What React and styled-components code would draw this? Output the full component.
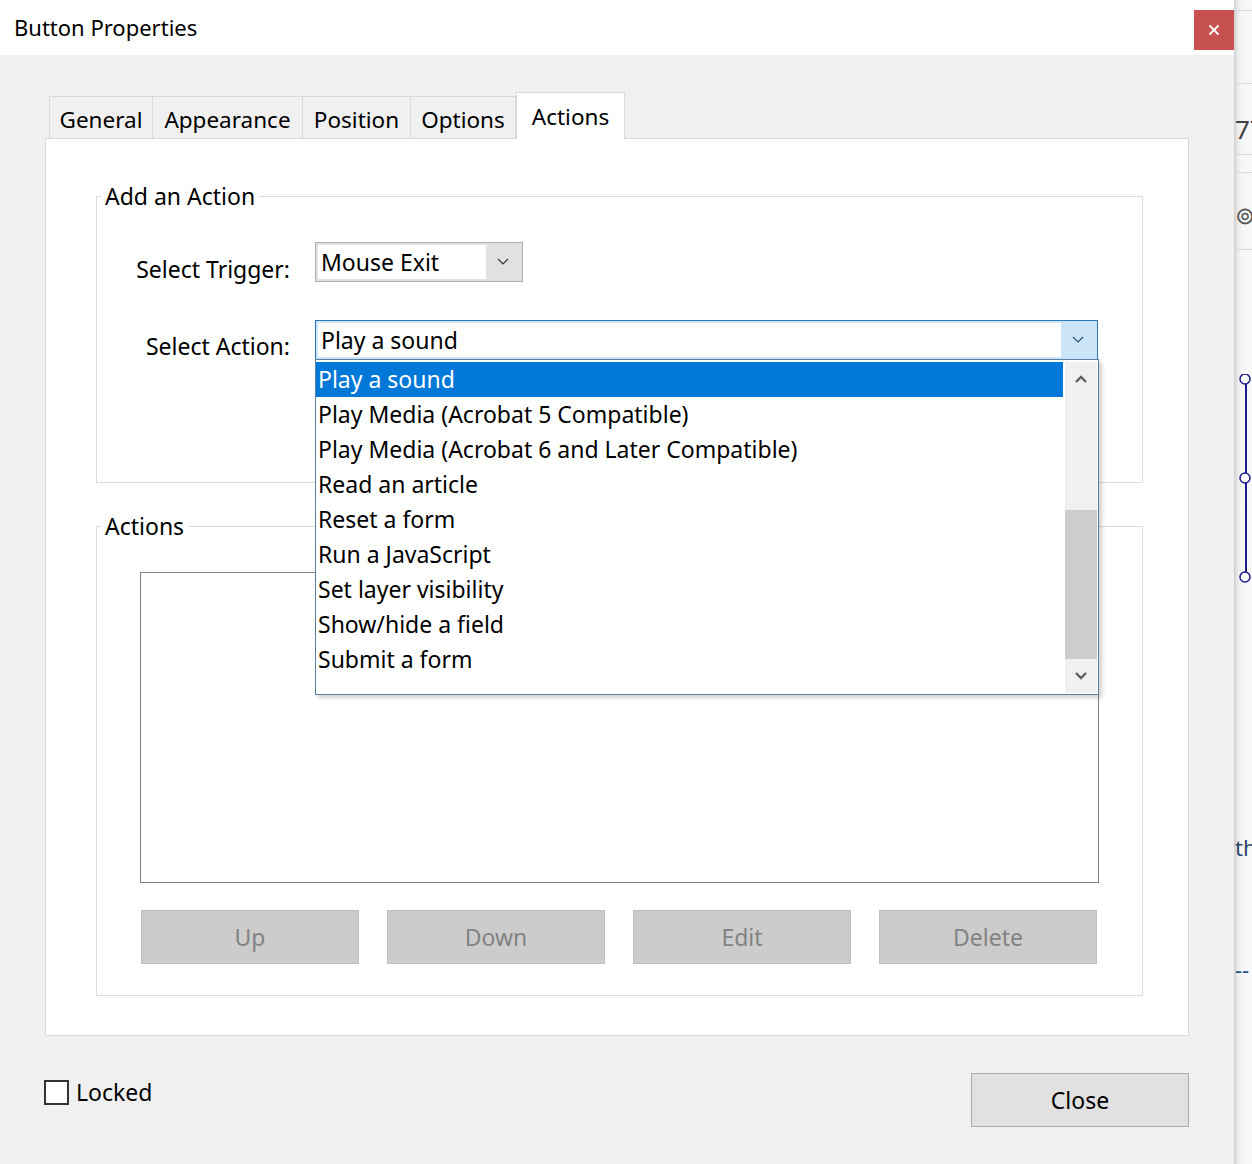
import React from 'react'
import styled, { createGlobalStyle } from 'styled-components'

const GlobalStyle = createGlobalStyle`
  html, body { margin: 0; padding: 0; }
  body {
    width: 1252px;
    height: 1164px;
    overflow: hidden;
    font-family: "Noto Sans", "Open Sans", sans-serif;
    color: #000;
    background: #f7f7f7;
  }
`

const Page = styled.div`
  display: flex;
  width: 1252px;
  height: 1164px;
`

const Dialog = styled.div`
  width: 1234px;
  display: flex;
  flex-direction: column;
  background: #f0f0f0;
`

const TitleBar = styled.div`
  height: 55px;
  background: #fff;
  display: flex;
  justify-content: space-between;
  align-items: flex-start;
`

const Title = styled.div`
  font-size: 22px;
  line-height: 26px;
  margin: 14px 0 0 14px;
`

const CloseX = styled.div`
  width: 40px;
  height: 40px;
  margin-top: 10px;
  background: #c75050;
  display: flex;
  align-items: center;
  justify-content: center;
`

const Body = styled.div`
  flex: 1;
  padding: 37px 45px 0 45px;
  display: flex;
  flex-direction: column;
`

const Tabs = styled.div`
  display: flex;
  align-items: flex-end;
  margin-left: 4px;
  position: relative;
  z-index: 1;
`

const Tab = styled.div`
  width: ${p => p.w}px;
  height: ${p => (p.active ? 47 : 42)}px;
  margin-bottom: ${p => (p.active ? -1 : 0)}px;
  box-sizing: border-box;
  border: 1px solid #d9d9d9;
  border-bottom: none;
  border-left: ${p => (p.first || p.active ? '1px solid #d9d9d9' : 'none')};
  background: ${p => (p.active ? '#fff' : '#f0f0f0')};
  font-size: 22.5px;
  display: flex;
  align-items: center;
  justify-content: center;
  padding-top: ${p => (p.active ? 0 : 4)}px;
`

const Panel = styled.div`
  height: 898px;
  box-sizing: border-box;
  background: #fff;
  border: 1px solid #d9d9d9;
  padding: 45px 45px 40px 50px;
  display: flex;
  flex-direction: column;
  gap: 31px;
`

const Group = styled.fieldset`
  margin: 0;
  min-width: 0;
  border: 1px solid #dcdcdc;
  padding: 34px 0 ${p => p.pb}px 0;
  position: relative;
`

const Legend = styled.legend`
  font-size: 23px;
  line-height: 24px;
  padding: 0 4px;
  margin-left: 4px;
`

const FormGrid = styled.div`
  display: grid;
  grid-template-columns: 193px auto;
  column-gap: 25px;
  row-gap: 37px;
  align-items: start;
`

const Label = styled.div`
  font-size: 23px;
  line-height: 28px;
  text-align: right;
  padding-top: ${p => p.pt}px;
`

const Combo = styled.div`
  position: relative;
  width: ${p => p.w}px;
  height: 40px;
  box-sizing: border-box;
  border: 1px solid ${p => (p.focused ? '#2b78b8' : '#adadad')};
  background: ${p => (p.focused ? '#cce4f7' : '#e1e1e1')};
  display: flex;
  padding: 2px;
`

const ComboText = styled.div`
  flex: 1;
  background: #fff;
  font-size: 23px;
  line-height: 34px;
  padding-left: 3px;
  white-space: nowrap;
`

const ComboArrow = styled.div`
  width: 34px;
  display: flex;
  align-items: center;
  justify-content: center;
`

const DropList = styled.div`
  position: absolute;
  top: 38px;
  left: -1px;
  width: 784px;
  height: 336px;
  box-sizing: border-box;
  border: 1px solid #5b7ea3;
  background: #fff;
  box-shadow: 3px 3px 4px rgba(0, 0, 0, 0.18);
  display: flex;
  padding: 2px 0 1px 0;
  z-index: 5;
`

const Items = styled.div`
  width: 747px;
  display: flex;
  flex-direction: column;
`

const Item = styled.div`
  height: 35px;
  box-sizing: border-box;
  padding-left: 2px;
  font-size: 23px;
  line-height: 34px;
  white-space: nowrap;
  background: ${p => (p.selected ? '#0078d7' : 'transparent')};
  color: ${p => (p.selected ? '#fff' : '#000')};
`

const ScrollBar = styled.div`
  width: 32px;
  margin-left: 2px;
  background: #f0f0f0;
  display: flex;
  flex-direction: column;
`

const ScrollBtn = styled.div`
  height: 34px;
  display: flex;
  align-items: center;
  justify-content: center;
`

const Track = styled.div`
  flex: 1;
  display: flex;
  flex-direction: column;
  justify-content: flex-end;
`

const Thumb = styled.div`
  height: 149px;
  background: #cdcdcd;
`

const ListBox = styled.div`
  height: 311px;
  box-sizing: border-box;
  margin: 0 43px;
  border: 1px solid #828282;
  background: #fff;
`

const ButtonRow = styled.div`
  display: flex;
  gap: 28px;
  margin: 27px 0 0 44px;
`

const Button = styled.div`
  width: 218px;
  height: 54px;
  box-sizing: border-box;
  border: 1px solid ${p => (p.disabled ? '#bfbfbf' : '#adadad')};
  background: ${p => (p.disabled ? '#cccccc' : '#e1e1e1')};
  color: ${p => (p.disabled ? '#838383' : '#000')};
  font-size: 23px;
  display: flex;
  align-items: center;
  justify-content: center;
`

const Footer = styled.div`
  display: flex;
  justify-content: space-between;
  align-items: flex-start;
  padding-top: 37px;
`

const CheckRow = styled.div`
  display: flex;
  align-items: center;
  gap: 7px;
  margin: 5px 0 0 -1px;
  font-size: 23px;
  line-height: 28px;
`

const CheckBox = styled.div`
  width: 25px;
  height: 25px;
  box-sizing: border-box;
  border: 2px solid #333;
  background: #fff;
`

const Strip = styled.div`
  width: 18px;
  background: linear-gradient(to right, #cfcfcf 0px, #ececec 4px, #f7f7f7 8px);
  display: flex;
  flex-direction: column;
  overflow: hidden;
`

const StripLine = styled.div`
  height: 1px;
  flex-shrink: 0;
  background: #d6d6d6;
  margin-top: ${p => p.mt}px;
`

const StripText = styled.div`
  font-size: ${p => p.size}px;
  line-height: ${p => p.size}px;
  height: ${p => p.size}px;
  flex-shrink: 0;
  color: ${p => p.color};
  margin-top: ${p => p.mt}px;
  white-space: nowrap;
  padding-left: 1px;
`

const Chevron = ({ up, color = '#333', bold }) => (
  <svg width="12" height="8" viewBox="0 0 12 8">
    <path
      d={up ? 'M1 7 L6 2 L11 7' : 'M1 1 L6 6 L11 1'}
      fill="none"
      stroke={color}
      strokeWidth={bold ? 2.4 : 1.1}
    />
  </svg>
)

const actions = [
  'Play a sound',
  'Play Media (Acrobat 5 Compatible)',
  'Play Media (Acrobat 6 and Later Compatible)',
  'Read an article',
  'Reset a form',
  'Run a JavaScript',
  'Set layer visibility',
  'Show/hide a field',
  'Submit a form',
]

const tabs = [
  { name: 'General', w: 104 },
  { name: 'Appearance', w: 150 },
  { name: 'Position', w: 108 },
  { name: 'Options', w: 105 },
  { name: 'Actions', w: 109, active: true },
]

export default function App() {
  return (
    <Page>
      <GlobalStyle />
      <Dialog>
        <TitleBar>
          <Title>Button Properties</Title>
          <CloseX>
            <svg width="12" height="12" viewBox="0 0 12 12">
              <path d="M1.5 1.5 L10.5 10.5 M10.5 1.5 L1.5 10.5" stroke="#fff" strokeWidth="1.8" />
            </svg>
          </CloseX>
        </TitleBar>
        <Body>
          <Tabs>
            {tabs.map((t, i) => (
              <Tab key={t.name} w={t.w} active={t.active} first={i === 0}>
                {t.name}
              </Tab>
            ))}
          </Tabs>
          <Panel>
            <Group pb={122}>
              <Legend>Add an Action</Legend>
              <FormGrid>
                <Label pt={13}>Select Trigger:</Label>
                <Combo w={208}>
                  <ComboText>Mouse Exit</ComboText>
                  <ComboArrow>
                    <Chevron />
                  </ComboArrow>
                </Combo>
                <Label pt={12}>Select Action:</Label>
                <Combo w={783} focused>
                  <ComboText>Play a sound</ComboText>
                  <ComboArrow>
                    <Chevron color="#2b4f73" />
                  </ComboArrow>
                  <DropList>
                    <Items>
                      {actions.map((a, i) => (
                        <Item key={a} selected={i === 0}>
                          {a}
                        </Item>
                      ))}
                    </Items>
                    <ScrollBar>
                      <ScrollBtn>
                        <Chevron up bold color="#606060" />
                      </ScrollBtn>
                      <Track>
                        <Thumb />
                      </Track>
                      <ScrollBtn>
                        <Chevron bold color="#606060" />
                      </ScrollBtn>
                    </ScrollBar>
                  </DropList>
                </Combo>
              </FormGrid>
            </Group>
            <Group pb={31}>
              <Legend>Actions</Legend>
              <ListBox />
              <ButtonRow>
                <Button disabled>Up</Button>
                <Button disabled>Down</Button>
                <Button disabled>Edit</Button>
                <Button disabled>Delete</Button>
              </ButtonRow>
            </Group>
          </Panel>
          <Footer>
            <CheckRow>
              <CheckBox />
              Locked
            </CheckRow>
            <Button>Close</Button>
          </Footer>
        </Body>
      </Dialog>
      <Strip>
        <StripLine mt={10} />
        <StripLine mt={72} />
        <StripText size={26} color="#444" mt={32}>77</StripText>
        <StripLine mt={12} />
        <StripLine mt={17} />
        <StripText size={24} color="#555" mt={30}>⊚</StripText>
        <StripLine mt={22} />
        <svg width="18" height="210" viewBox="0 0 18 210" style={{ marginTop: 124, flexShrink: 0 }}>
          <path d="M12 5 V203" stroke="#1c1c8c" strokeWidth="2" />
          <circle cx="11" cy="5" r="5" fill="#fff" stroke="#1c1c8c" strokeWidth="1.5" />
          <circle cx="11" cy="104" r="5" fill="#fff" stroke="#1c1c8c" strokeWidth="1.5" />
          <circle cx="11" cy="203" r="5" fill="#fff" stroke="#1c1c8c" strokeWidth="1.5" />
        </svg>
        <StripText size={22} color="#2b4a6a" mt={252}>th</StripText>
        <StripText size={22} color="#1f4e8c" mt={100}>--</StripText>
      </Strip>
    </Page>
  )
}
